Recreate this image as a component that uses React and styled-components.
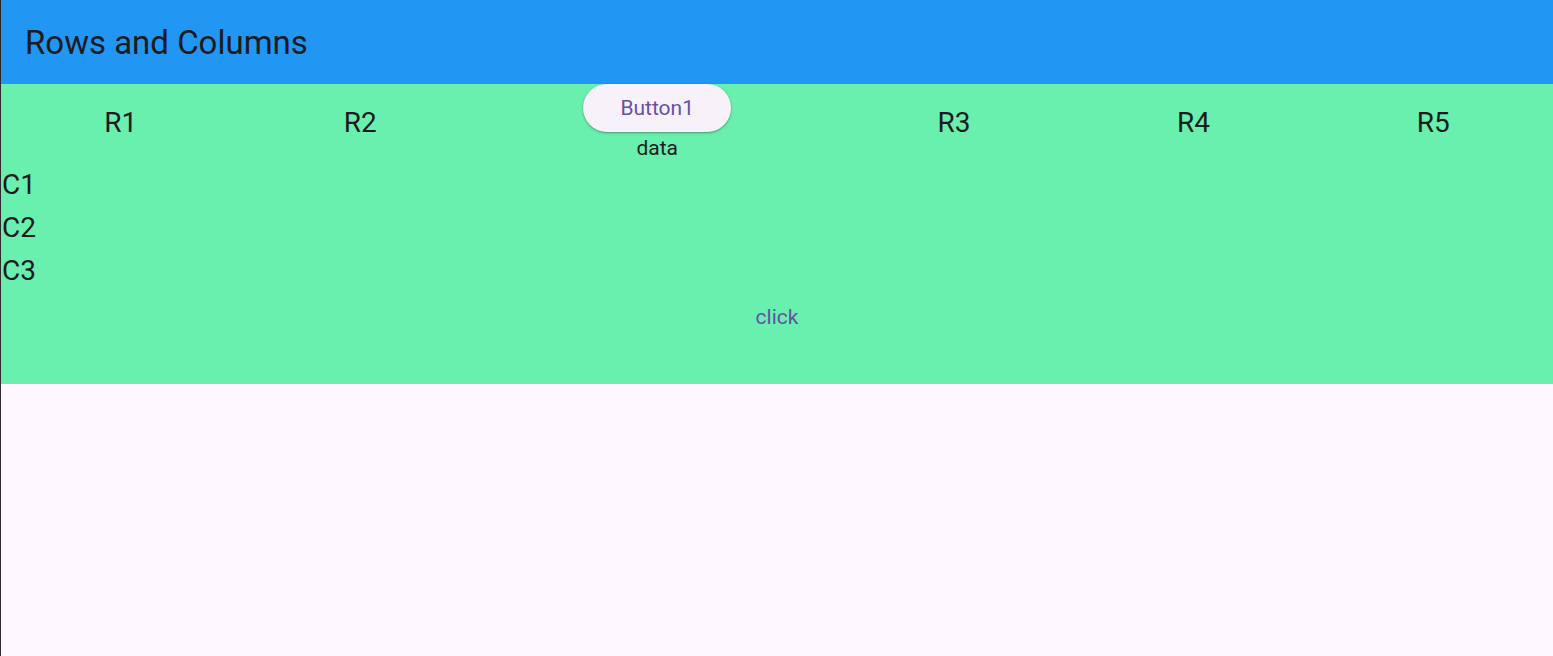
import React from 'react';
import styled, { createGlobalStyle } from 'styled-components';

const GlobalStyle = createGlobalStyle`
  html, body {
    margin: 0;
    padding: 0;
    height: 100%;
  }
  body {
    font-family: Roboto, 'Noto Sans', sans-serif;
    background: #fef7ff;
    color: #1d1b20;
  }
  #root {
    min-height: 100vh;
  }
`;

const Screen = styled.div`
  min-height: 100vh;
  border-left: 1px solid #2b2b2e;
  background: #fef7ff;
  display: flex;
  flex-direction: column;
`;

const AppBar = styled.header`
  height: 84px;
  background: #2196f3;
  display: flex;
  align-items: center;
  padding: 0 24px;
`;

const Title = styled.h1`
  margin: 0;
  font-size: 33px;
  font-weight: 400;
  color: #1d1b20;
`;

const Panel = styled.section`
  height: 300px;
  background: #69f0ae;
  display: flex;
  flex-direction: column;
`;

const TopRow = styled.div`
  display: flex;
  justify-content: space-around;
  align-items: center;
`;

const Cell = styled.span`
  font-size: 28px;
  line-height: 32px;
`;

const Stack = styled.div`
  display: flex;
  flex-direction: column;
  align-items: center;
`;

const PillButton = styled.button`
  height: 48px;
  padding: 0 37px;
  border: none;
  border-radius: 24px;
  background: #f7f2fa;
  color: #6750a4;
  font-family: inherit;
  font-size: 21px;
  font-weight: 400;
  box-shadow: 0 1px 3px rgba(0, 0, 0, 0.25), 0 1px 1px rgba(0, 0, 0, 0.12);
  cursor: pointer;
`;

const Caption = styled.span`
  padding-top: 2px;
  font-size: 21px;
  line-height: 28px;
  color: #1d1b20;
`;

const List = styled.div`
  display: flex;
  flex-direction: column;
  margin-top: 1px;
  padding-left: 1px;
`;

const Item = styled.span`
  font-size: 28px;
  line-height: 43px;
`;

const FlatButton = styled.button`
  align-self: center;
  height: 48px;
  margin-top: 1px;
  padding: 0 18px;
  border: none;
  background: transparent;
  color: #6750a4;
  font-family: inherit;
  font-size: 21px;
  font-weight: 400;
  cursor: pointer;
`;

const rows = ['R1', 'R2', null, 'R3', 'R4', 'R5'];
const cols = ['C1', 'C2', 'C3'];

const App = () => {
  return (
    <>
      <GlobalStyle />
      <Screen>
        <AppBar>
          <Title>Rows and Columns</Title>
        </AppBar>
        <Panel>
          <TopRow>
            {rows.map((r, i) =>
              r ? (
                <Cell key={i}>{r}</Cell>
              ) : (
                <Stack key={i}>
                  <PillButton>Button1</PillButton>
                  <Caption>data</Caption>
                </Stack>
              )
            )}
          </TopRow>
          <List>
            {cols.map((c) => (
              <Item key={c}>{c}</Item>
            ))}
          </List>
          <FlatButton>click</FlatButton>
        </Panel>
      </Screen>
    </>
  );
};

export default App;
